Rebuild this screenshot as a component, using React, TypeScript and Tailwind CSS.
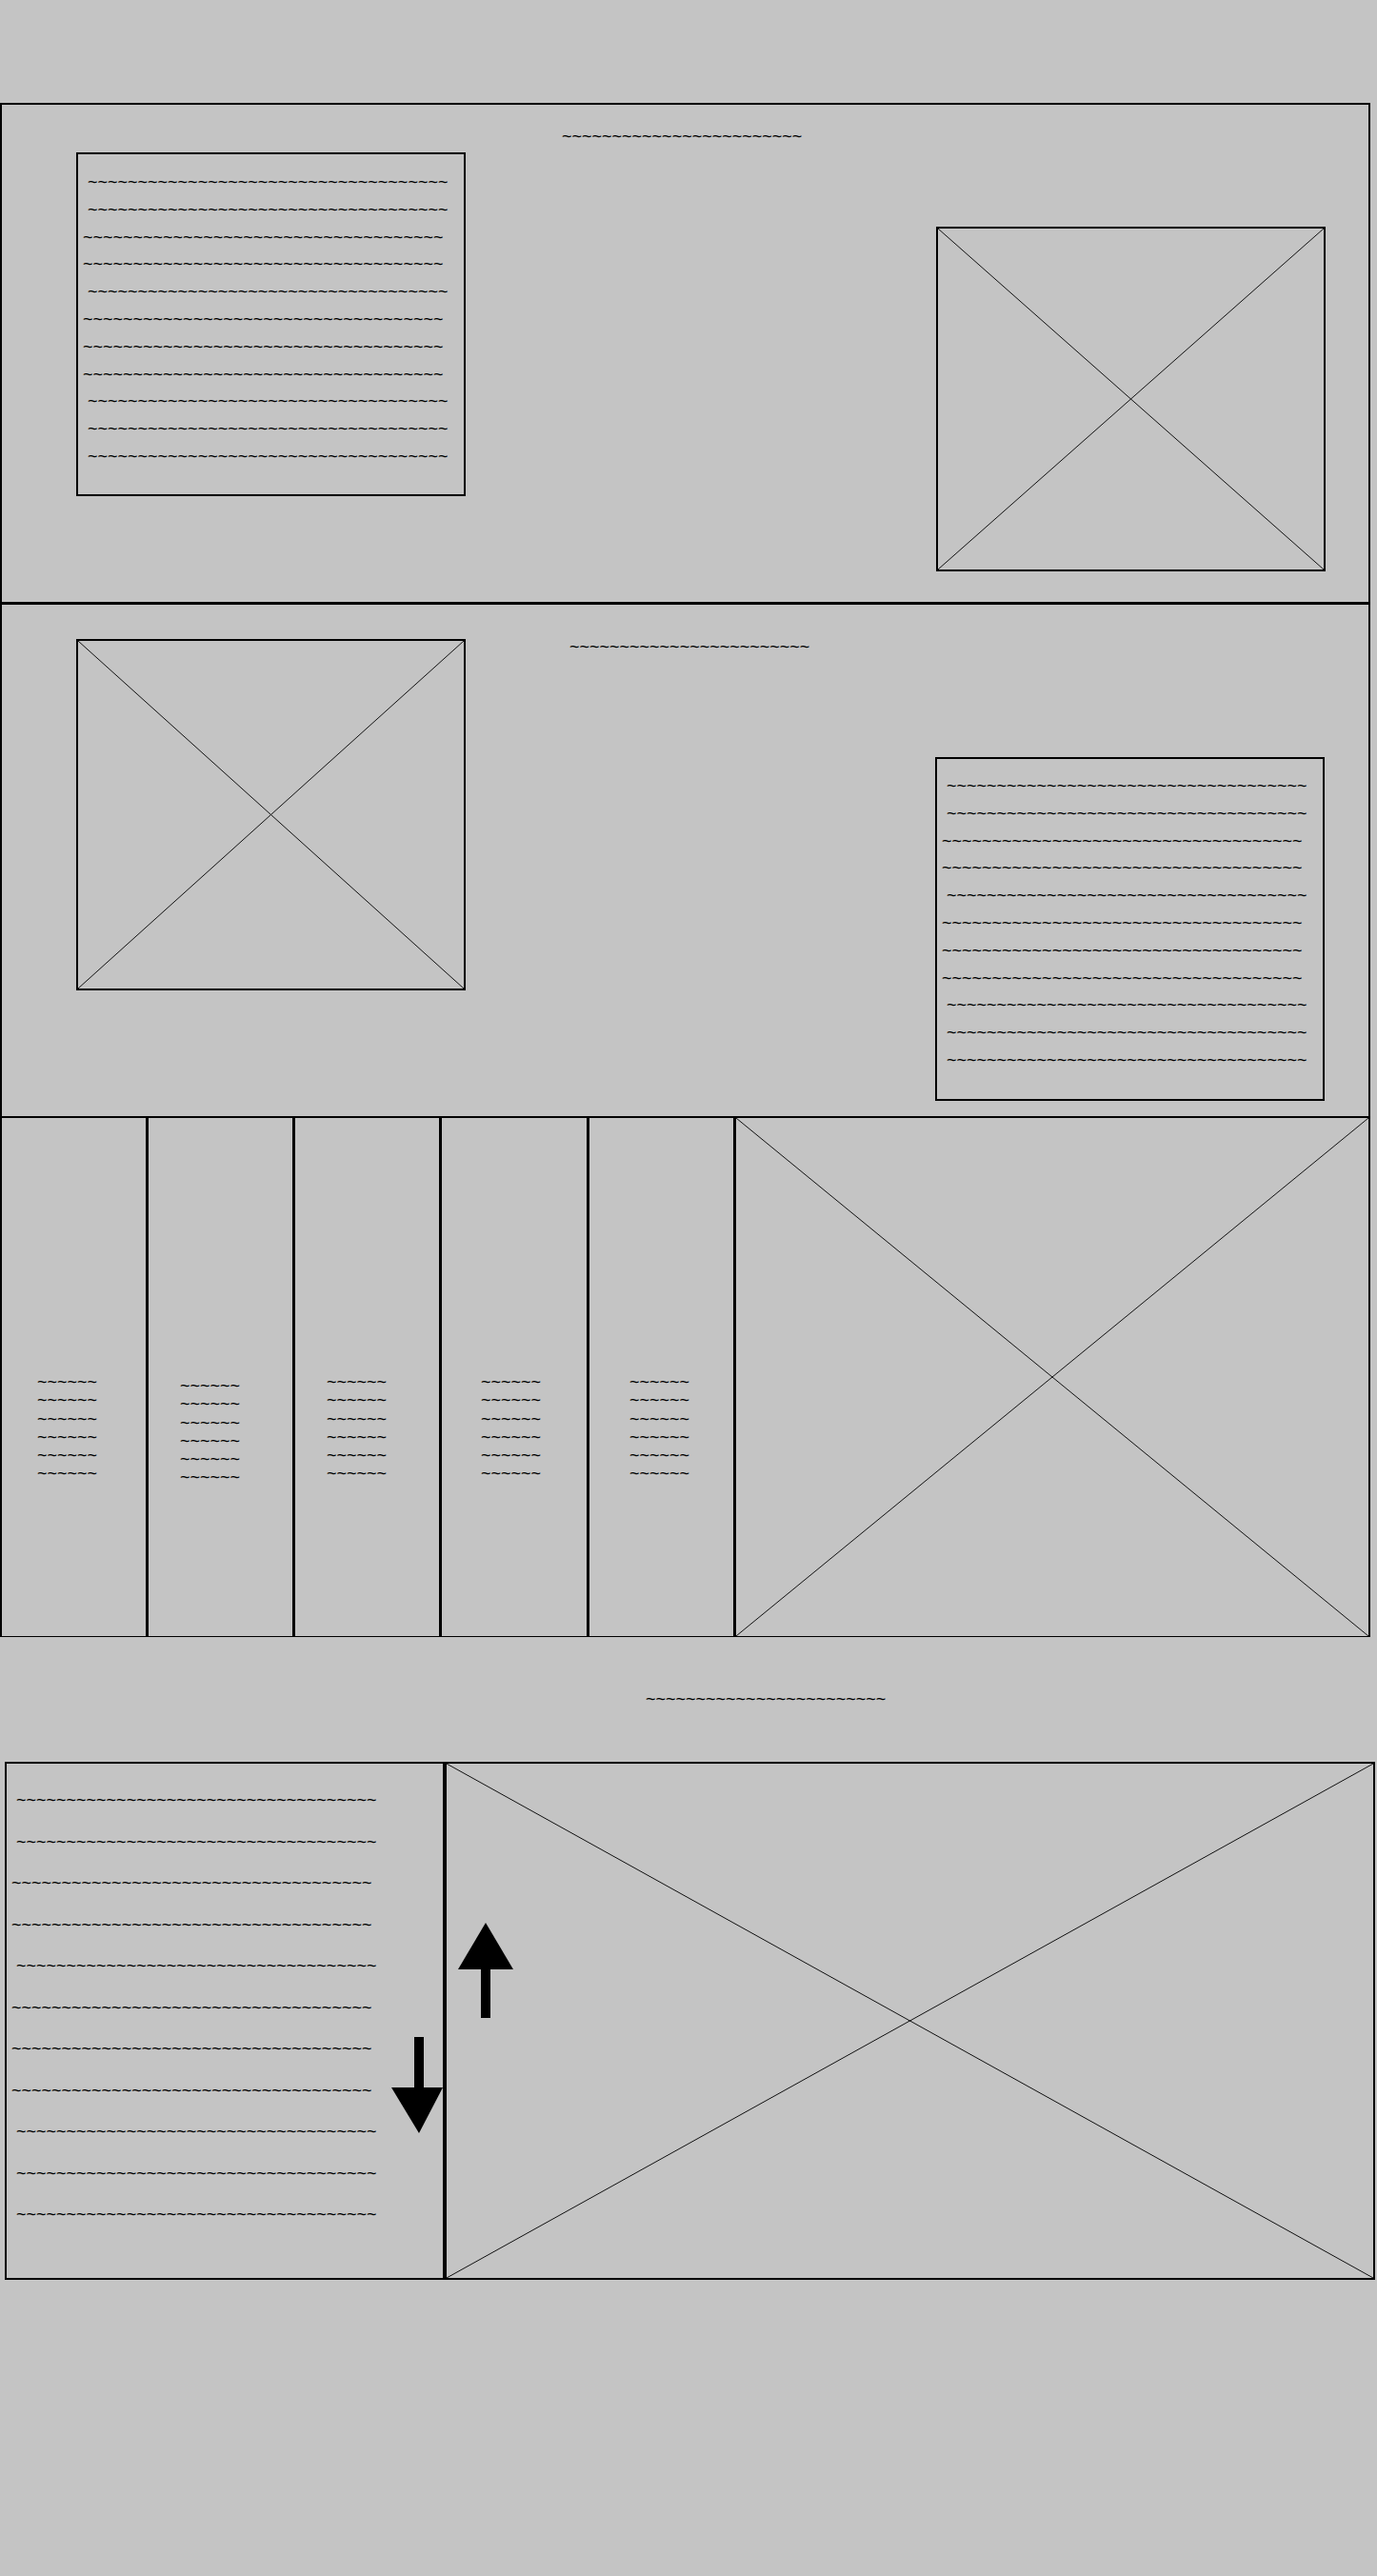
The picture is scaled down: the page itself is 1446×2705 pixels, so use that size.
import React from "react";

const tildes = (n: number) => "~".repeat(n);
const PATTERN = [1, 1, 0, 0, 1, 0, 0, 0, 1, 1, 1];

function XMark() {
  return (
    <svg
      className="absolute inset-0 h-full w-full"
      viewBox="0 0 100 100"
      preserveAspectRatio="none"
    >
      <line x1="0" y1="0" x2="100" y2="100" stroke="#111" strokeWidth="1" vectorEffect="non-scaling-stroke" />
      <line x1="100" y1="0" x2="0" y2="100" stroke="#111" strokeWidth="1" vectorEffect="non-scaling-stroke" />
    </svg>
  );
}

function TextLines({ lh }: { lh: string }) {
  return (
    <>
      {PATTERN.map((indent, i) => (
        <div key={i} className={`${lh} whitespace-nowrap ${indent ? "pl-[5px]" : "pl-0"}`}>
          {tildes(36)}
        </div>
      ))}
    </>
  );
}

function ColText() {
  return (
    <>
      {[0, 1, 2, 3, 4, 5].map((i) => (
        <div key={i} className="leading-[19.3px] whitespace-nowrap">
          {tildes(6)}
        </div>
      ))}
    </>
  );
}

export default function App() {
  return (
    <div className="min-h-[2705px] w-[1446px] bg-[#c4c4c4] font-['Liberation_Sans',Arial,sans-serif] text-[18px] text-black">
      <div className="h-[108px]" />
      <div className="w-[1439px] border-x-2 border-black">
        {/* Section 1 */}
        <section className="flex h-[524px] items-start border-t-2 border-black">
          <div className="ml-[78px] mt-[50px] h-[361px] w-[409px] shrink-0 border-2 border-black pl-[5px] pt-[15px]">
            <TextLines lh="leading-[28.8px]" />
          </div>
          <div className="ml-[101px] mt-[23px] h-[21px] flex-1 whitespace-nowrap leading-[21px]">{tildes(24)}</div>
          <div className="relative mr-[45px] mt-[128px] h-[362px] w-[409px] shrink-0 border-2 border-black">
            <XMark />
          </div>
        </section>

        {/* Section 2 */}
        <section className="flex h-[540px] items-start border-t-[3px] border-black">
          <div className="relative ml-[78px] mt-[36px] h-[369px] w-[409px] shrink-0 border-2 border-black">
            <XMark />
          </div>
          <div className="ml-[109px] mt-[34px] h-[21px] flex-1 whitespace-nowrap leading-[21px]">{tildes(24)}</div>
          <div className="mr-[46px] mt-[160px] h-[361px] w-[409px] shrink-0 border-2 border-black pl-[5px] pt-[14px]">
            <TextLines lh="leading-[28.8px]" />
          </div>
        </section>

        {/* Section 3 */}
        <section className="flex h-[547px] border-y border-t-2 border-black">
          <div className="w-[154px] shrink-0 border-r-[3px] border-black pl-[37px] pt-[268px]">
            <ColText />
          </div>
          <div className="w-[154px] shrink-0 border-r-[3px] border-black pl-[33px] pt-[272px]">
            <ColText />
          </div>
          <div className="w-[154px] shrink-0 border-r-[3px] border-black pl-[33px] pt-[268px]">
            <ColText />
          </div>
          <div className="w-[155px] shrink-0 border-r-[3px] border-black pl-[41px] pt-[268px]">
            <ColText />
          </div>
          <div className="w-[154px] shrink-0 border-r-[3px] border-black pl-[42px] pt-[268px]">
            <ColText />
          </div>
          <div className="relative flex-1">
            <XMark />
          </div>
        </section>
      </div>

      {/* Section 4 */}
      <div className="ml-[678px] mt-[55px] h-[21px] whitespace-nowrap leading-[21px]">{tildes(24)}</div>
      <section className="relative ml-[5px] mt-[55px] flex h-[544px] w-[1439px] border-2 border-black">
        <div className="w-[462px] shrink-0 border-r-4 border-black pl-[5px] pt-[17px]">
          <TextLines lh="leading-[43.5px]" />
        </div>
        <div className="relative flex-1">
          <XMark />
        </div>
        <svg
          className="absolute left-[404px] top-[167px] h-[221px] w-[128px]"
          viewBox="0 0 128 221"
        >
          <polygon points="99,0 70,49 128,49" fill="#000" />
          <rect x="94" y="49" width="10" height="51" fill="#000" />
          <rect x="24" y="120" width="10" height="53" fill="#000" />
          <polygon points="0,173 54,173 29,221" fill="#000" />
        </svg>
      </section>
    </div>
  );
}
